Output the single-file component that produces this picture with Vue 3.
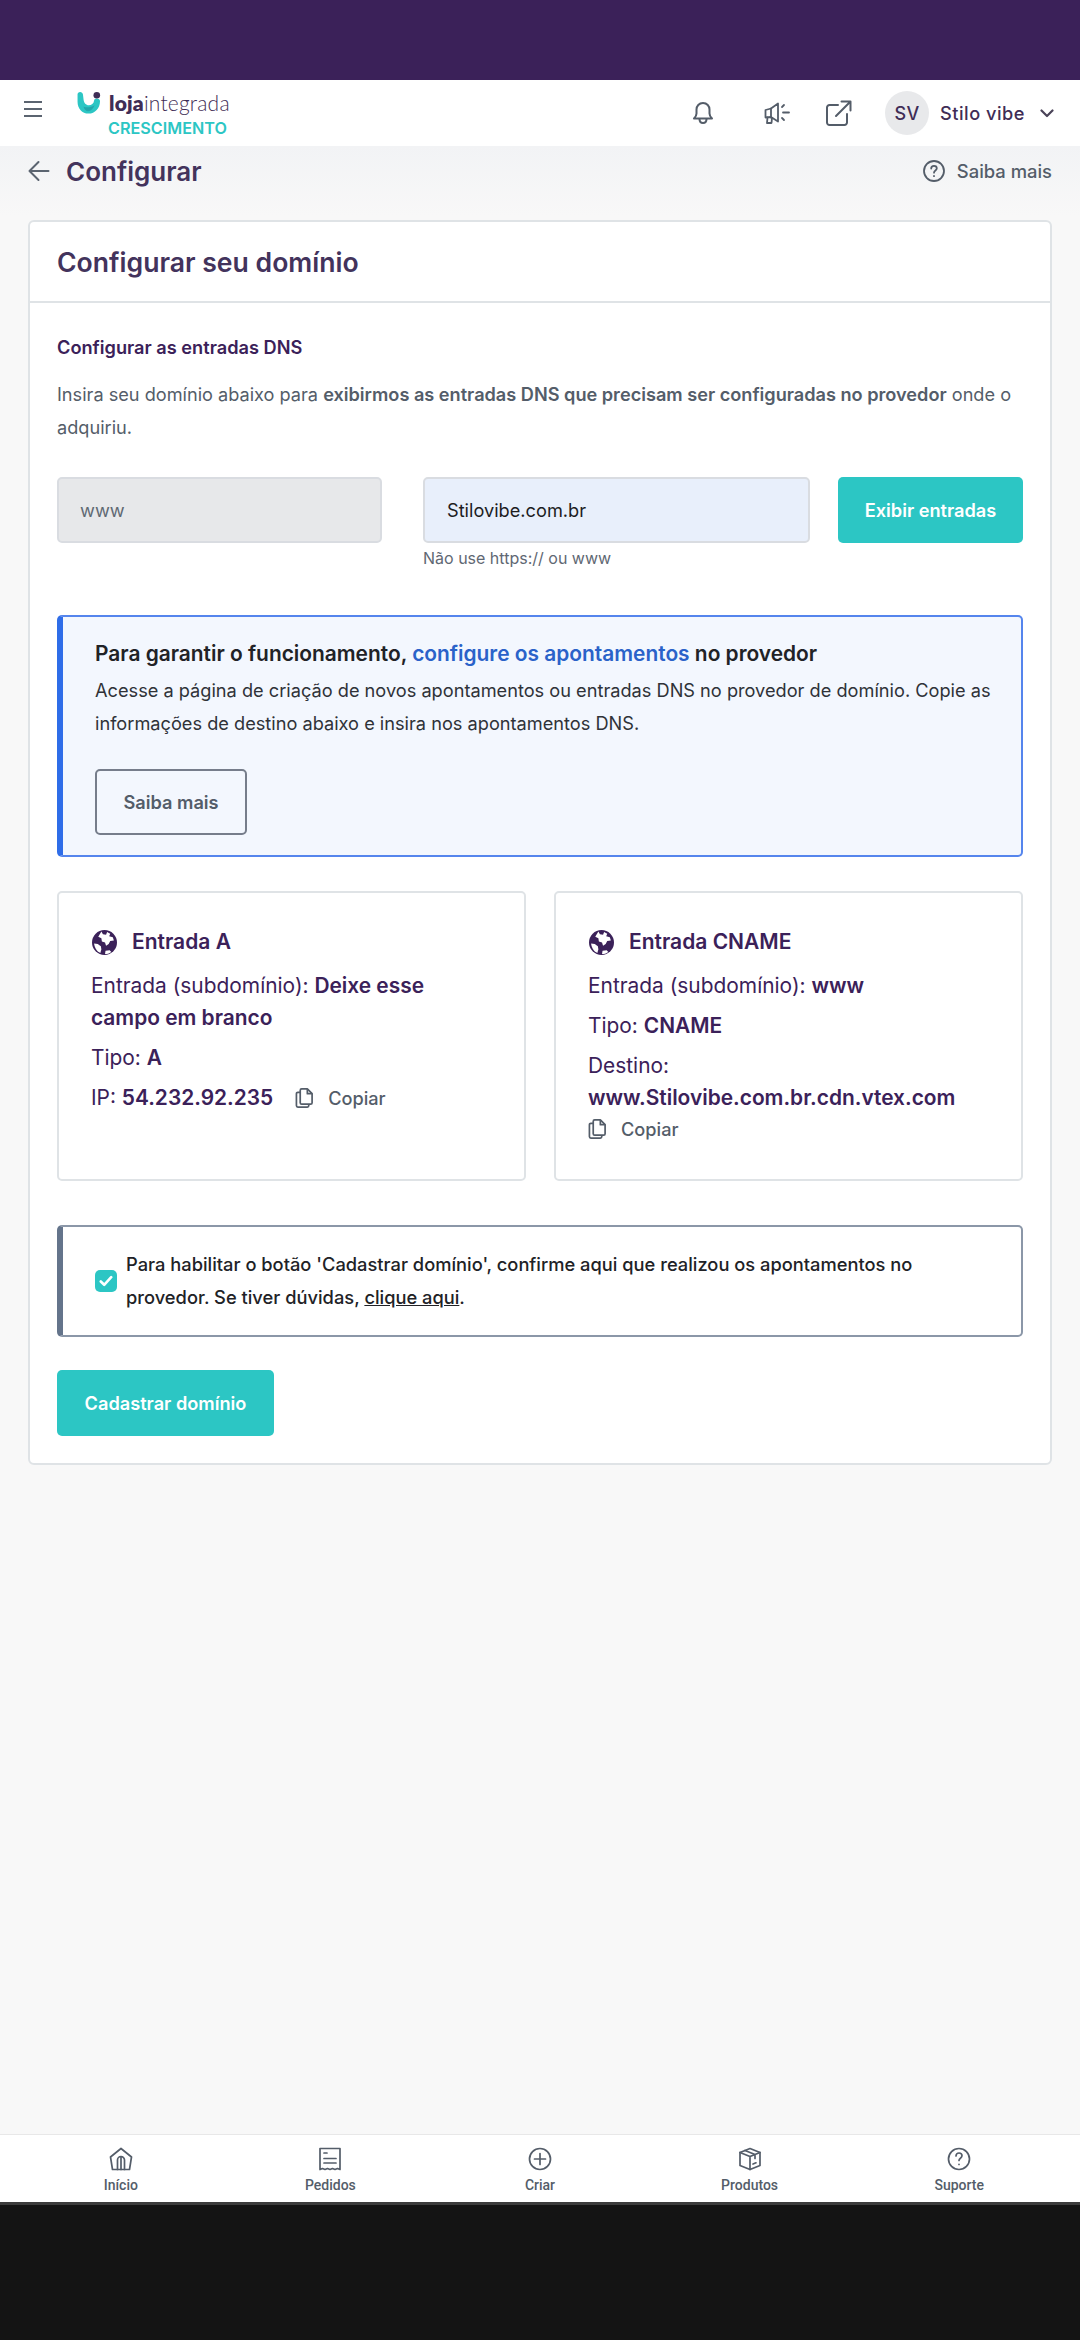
<template>
  <div class="app">
    <div class="topbar"></div>

    <!-- HEADER -->
    <header class="header">
      <button class="menu-btn" aria-label="Menu">
        <svg width="20" height="18" viewBox="0 0 20 18" fill="none" stroke="#5b6470" stroke-width="2">
          <path d="M1 2h18M1 9h18M1 16h18" />
        </svg>
      </button>
      <div class="brand">
        <div class="logo">
          <svg class="logo-mark" width="24" height="22" viewBox="0 0 26 24">
            <path d="M0.500 2.800c0-1.600 1.200-2.800 2.800-2.800s2.900 1.100 3.100 2.800l0.700 5.700c0.500 3.500 2.500 6 5.700 6 3 0 5.300-2 5.700-5 0.200-1.300 1.300-2.300 2.800-2.300 2.200 0 3.700 1 3.700 2.800C25 17.700 19.500 23.500 12.500 23.500S0.500 17.700 0.500 10.500z" fill="#2cc6c4" />
            <path d="M7 16c3 1.200 8 1.200 12-1.500-1.500 4-4 6.500-7 6.500-2 0-4-2-5-5z" fill="#22a6ab" />
            <circle cx="21.500" cy="3.600" r="3.600" fill="#3f2d56" />
          </svg>
          <span class="wordmark"><b>loja</b>integrada</span>
        </div>
        <div class="plan">CRESCIMENTO</div>
      </div>

      <div class="header-actions">
        <svg class="bell" width="22" height="24" viewBox="0 0 22 24" fill="none" stroke="#545d69" stroke-width="2" stroke-linejoin="round">
          <path d="M11 2c-4 0-6.500 3-6.500 6.500v4c0 2-1 3.500-2.500 5h18c-1.500-1.500-2.500-3-2.500-5v-4C17.500 5 15 2 11 2z" />
          <path d="M7.500 18c0 2.500 1.500 4 3.500 4s3.500-1.500 3.500-4" />
        </svg>
        <svg class="megaphone" width="26" height="24" viewBox="0 0 26 24" fill="none" stroke="#545d69" stroke-width="1.800" stroke-linejoin="round" stroke-linecap="round">
          <path d="M1.500 9l5.500-1.500 7-5v18l-7-4.500-5.500 0.500z" />
          <path d="M3.500 16.500l-0.500 5.500h4.500l0.500-5M7 7.500v9" />
          <path d="M18 6l2-2M19 11.500h6M18 17l2 2" />
        </svg>
        <svg class="external" width="26" height="26" viewBox="0 0 26 26" fill="none" stroke="#545d69" stroke-width="2" stroke-linecap="round" stroke-linejoin="round">
          <path d="M12 5H3.500A2.500 2.500 0 0 0 1 7.500v15A2.500 2.500 0 0 0 3.500 25h15a2.500 2.500 0 0 0 2.500-2.500V14" />
          <path d="M10 16L24.500 1.500M15.500 1.500h9v9" />
        </svg>
        <div class="avatar">SV</div>
        <span class="store">Stilo vibe</span>
        <svg width="14" height="9" viewBox="0 0 14 9" fill="none" stroke="#4a4358" stroke-width="2.200" stroke-linecap="round" stroke-linejoin="round">
          <path d="M1.500 1.500L7 7l5.500-5.500" />
        </svg>
      </div>
    </header>

    <main class="page">
      <div class="page-head">
        <div class="page-title">
          <svg width="22" height="22" viewBox="0 0 22 22" fill="none" stroke="#5b6470" stroke-width="2" stroke-linecap="round" stroke-linejoin="round">
            <path d="M20.500 11H1.500M10.500 2L1.500 11l9 9" />
          </svg>
          <h1>Configurar</h1>
        </div>
        <div class="help">
          <svg width="22" height="22" viewBox="0 0 22 22" fill="none" stroke="#545d69" stroke-width="1.800" stroke-linecap="round">
            <circle cx="11" cy="11" r="10" />
            <path d="M8.200 8.500c0-1.700 1.300-2.700 2.800-2.700s2.800 1 2.800 2.500c0 2.200-2.800 2.200-2.800 4.400" />
            <path d="M11 16v0.200" />
          </svg>
          <span>Saiba mais</span>
        </div>
      </div>

      <!-- CARD -->
      <section class="card">
        <div class="card-title">Configurar seu domínio</div>
        <div class="card-body">
          <h3 class="dns-title">Configurar as entradas DNS</h3>
          <p class="intro">
            Insira seu domínio abaixo para
            <strong>exibirmos as entradas DNS que precisam ser configuradas no provedor</strong>
            onde o adquiriu.
          </p>

          <div class="form-row">
            <div class="field sub">www</div>
            <div class="domain-col">
              <div class="field domain">Stilovibe.com.br</div>
              <div class="hint">Não use https:// ou www</div>
            </div>
            <button class="btn show-btn">Exibir entradas</button>
          </div>

          <div class="alert">
            <div class="alert-title">
              Para garantir o funcionamento, <span>configure os apontamentos</span> no provedor
            </div>
            <p>
              Acesse a página de criação de novos apontamentos ou entradas DNS no provedor de domínio. Copie as
              informações de destino abaixo e insira nos apontamentos DNS.
            </p>
            <button class="btn-outline">Saiba mais</button>
          </div>

          <div class="entries">
            <div class="entry">
              <div class="entry-title">
                <svg class="globe" viewBox="0 0 24 24">
                  <circle cx="12" cy="12" r="12" fill="#3b2159" />
                  <path d="M9 1.500l1.500 2.500 3 0.500 1-2.500 3 1.500-1 2.500 3.500 1 1 3-3.500 0.500-1.500 3-2.500 1.500-1-3-3-1-0.500-3-3-1.500z" fill="#fff" />
                  <path d="M2 13l3.500 0.500 3 2 0.500 3-1 3.500c-3-1-5.500-4.500-6-9z" fill="#fff" />
                  <path d="M13 20l4-0.500 1.500 1.500c-2 1.500-4 2-6 2z" fill="#fff" />
                </svg>
                <span>Entrada A</span>
              </div>
              <div class="entry-line">Entrada (subdomínio): <b>Deixe esse campo em branco</b></div>
              <div class="entry-line">Tipo: <b>A</b></div>
              <div class="entry-line ip-line">
                <span>IP: <b>54.232.92.235</b></span>
                <span class="copy">
                  <svg class="copy-icon" viewBox="0 0 20 22" fill="none" stroke="#545d69" stroke-width="1.800" stroke-linejoin="round">
                    <path d="M7 1.500h6l5 5v9.500a1.500 1.500 0 0 1-1.500 1.500h-9.500a1.500 1.500 0 0 1-1.500-1.500V3a1.500 1.500 0 0 1 1.500-1.500z" />
                    <path d="M13 1.500v5h5M5.500 5H3a1.500 1.500 0 0 0-1.500 1.500V19A1.500 1.500 0 0 0 3 20.500h10a1.500 1.500 0 0 0 1.500-1.500v-1.500" />
                  </svg>
                  Copiar
                </span>
              </div>
            </div>

            <div class="entry">
              <div class="entry-title">
                <svg class="globe" viewBox="0 0 24 24">
                  <circle cx="12" cy="12" r="12" fill="#3b2159" />
                  <path d="M9 1.500l1.500 2.500 3 0.500 1-2.500 3 1.500-1 2.500 3.500 1 1 3-3.500 0.500-1.500 3-2.500 1.500-1-3-3-1-0.500-3-3-1.500z" fill="#fff" />
                  <path d="M2 13l3.500 0.500 3 2 0.500 3-1 3.500c-3-1-5.500-4.500-6-9z" fill="#fff" />
                  <path d="M13 20l4-0.500 1.500 1.500c-2 1.500-4 2-6 2z" fill="#fff" />
                </svg>
                <span>Entrada CNAME</span>
              </div>
              <div class="entry-line">Entrada (subdomínio): <b>www</b></div>
              <div class="entry-line">Tipo: <b>CNAME</b></div>
              <div class="entry-line dest">Destino:<br /><b>www.Stilovibe.com.br.cdn.vtex.com</b></div>
              <span class="copy copy-block">
                <svg class="copy-icon" viewBox="0 0 20 22" fill="none" stroke="#545d69" stroke-width="1.800" stroke-linejoin="round">
                  <path d="M7 1.500h6l5 5v9.500a1.500 1.500 0 0 1-1.500 1.500h-9.500a1.500 1.500 0 0 1-1.500-1.500V3a1.500 1.500 0 0 1 1.500-1.500z" />
                  <path d="M13 1.500v5h5M5.500 5H3a1.500 1.500 0 0 0-1.500 1.500V19A1.500 1.500 0 0 0 3 20.500h10a1.500 1.500 0 0 0 1.500-1.500v-1.500" />
                </svg>
                Copiar
              </span>
            </div>
          </div>

          <div class="confirm">
            <span class="check">
              <svg width="14" height="12" viewBox="0 0 14 12" fill="none" stroke="#fff" stroke-width="2.600" stroke-linecap="round" stroke-linejoin="round">
                <path d="M1.800 6.500l3.400 3.300 7-7.600" />
              </svg>
            </span>
            <p>
              Para habilitar o botão 'Cadastrar domínio', confirme aqui que realizou os apontamentos no provedor.
              Se tiver dúvidas, <u>clique aqui</u>.
            </p>
          </div>

          <button class="btn save-btn">Cadastrar domínio</button>
        </div>
      </section>
    </main>

    <!-- BOTTOM NAV -->
    <nav class="bottom-nav">
      <div class="nav-item" v-for="item in navItems" :key="item.label">
        <svg width="24" height="24" viewBox="0 0 24 24" fill="none" stroke="#545d69" stroke-width="1.700" stroke-linecap="round" stroke-linejoin="round">
          <path v-for="(d, i) in item.paths" :key="i" :d="d" />
        </svg>
        <span>{{ item.label }}</span>
      </div>
    </nav>
    <div class="system-bar"></div>
  </div>
</template>

<script setup>
const navItems = [
  {
    label: "Início",
    paths: [
      "M12 1.500L22.500 10l-2 12.500h-17L1.500 10z",
      "M8.500 22.500V13a3.500 3.500 0 0 1 7 0v9.500M12 10v12.500",
    ],
  },
  {
    label: "Pedidos",
    paths: [
      "M2 1.500h20v21l-2.500-1-2.500 1-2.500-1-2.500 1-2.500-1-2.500 1-2.500-1-2.500 1z",
      "M6 6h3M6 11.500h12M6 16h12",
    ],
  },
  {
    label: "Criar",
    paths: [
      "M12 1.500a10.500 10.500 0 1 0 0 21 10.500 10.500 0 0 0 0-21z",
      "M12 6.500v11M6.500 12h11",
    ],
  },
  {
    label: "Produtos",
    paths: [
      "M12 1.500l10 4v13l-10 4-10-4v-13z",
      "M2 5.500l10 4 10-4M12 9.500v13M7 3.500l10 4v4",
      "M15 17l3-1.200",
    ],
  },
  {
    label: "Suporte",
    paths: [
      "M12 1.500a10.500 10.500 0 1 0 0 21 10.500 10.500 0 0 0 0-21z",
      "M9 9c0-1.800 1.300-3 3-3s3 1.200 3 2.800c0 2.400-3 2.400-3 4.600M12 17.300v0.200",
    ],
  },
];
</script>

<style>
html,
body {
  margin: 0;
  background: #141414;
}
</style>

<style scoped>
.app {
  width: 1080px;
  height: 2340px;
  display: flex;
  flex-direction: column;
  font-family: Inter, "Liberation Sans", sans-serif;
  background: #f8f8f8;
  color: #3b2159;
  overflow: hidden;
}

.topbar {
  height: 80px;
  background: #3b2159;
  flex: none;
}

.header {
  height: 66px;
  flex: none;
  background: #fff;
  display: flex;
  align-items: center;
  padding: 0 26px 0 23px;
  position: relative;
}

.menu-btn {
  border: 0;
  background: none;
  padding: 0;
  width: 20px;
  height: 18px;
  margin-top: -8px;
}

.brand {
  margin-left: 34px;
  margin-top: 2px;
}

.logo {
  display: flex;
  align-items: center;
  height: 24px;
}

.wordmark {
  margin-left: 8px;
  font-family: Lato, sans-serif;
  font-size: 21px;
  font-weight: 300;
  letter-spacing: 0.2px;
  color: #3f2d56;
  line-height: 24px;
}

.wordmark b {
  font-weight: 800;
}

.plan {
  margin-left: 31px;
  margin-top: 4px;
  font-size: 16.2px;
  font-weight: 600;
  line-height: 18px;
  color: #2cc6c4;
}

.header-actions {
  margin-left: auto;
  display: flex;
  align-items: center;
}

.bell {
  margin-right: 50px;
}

.megaphone {
  margin-right: 36px;
}

.external {
  margin-right: 33px;
}

.avatar {
  width: 44px;
  height: 44px;
  border-radius: 50%;
  background: #e8e9eb;
  color: #3f2d56;
  font-size: 18px;
  font-weight: 500;
  letter-spacing: 0.5px;
  display: flex;
  align-items: center;
  justify-content: center;
}

.store {
  margin-left: 11px;
  margin-right: 15px;
  font-size: 18.2px;
  font-weight: 500;
  letter-spacing: 0.5px;
  color: #3f2d56;
}

.page {
  flex: 1;
  min-height: 0;
  padding: 0 28px;
  background: linear-gradient(#f2f3f5, #f8f8f8 70px) no-repeat;
}

.page-head {
  height: 74px;
  padding-bottom: 24px;
  box-sizing: border-box;
  display: flex;
  align-items: center;
  justify-content: space-between;
}

.page-title {
  display: flex;
  align-items: center;
  gap: 16px;
}

.page-title h1 {
  margin: 0;
  font-size: 26px;
  font-weight: 600;
  color: #43335c;
}

.help {
  display: flex;
  align-items: center;
  gap: 12px;
  font-size: 18.4px;
  font-weight: 500;
  color: #545d69;
}

.card {
  background: #fff;
  border: 2px solid #dfe3e6;
  border-radius: 6px;
}

.card-title {
  height: 79px;
  box-sizing: content-box;
  padding-left: 27px;
  padding-bottom: 0;
  display: flex;
  align-items: center;
  font-size: 26.6px;
  line-height: 30px;
  font-weight: 600;
  color: #43335c;
  border-bottom: 2px solid #dfe3e6;
}

.card-body {
  padding: 31px 27px 27px;
}

.dns-title {
  margin: 0;
  font-size: 18.2px;
  line-height: 26px;
  font-weight: 600;
  color: #3b2159;
}

.intro {
  margin: 18px 0 0;
  font-size: 18.15px;
  line-height: 33px;
  color: #545d69;
}

.intro strong {
  font-weight: 600;
}

.form-row {
  display: flex;
  align-items: flex-start;
  margin-top: 33px;
}

.field {
  height: 66px;
  box-sizing: border-box;
  border: 2px solid #d9dce1;
  border-radius: 5px;
  padding-left: 22px;
  display: flex;
  align-items: center;
  font-size: 18.2px;
}

.sub {
  width: 325px;
  padding-left: 21px;
  background: #e7e8ea;
  color: #5f6873;
}

.domain-col {
  width: 387px;
  margin-left: 41px;
}

.domain {
  background: #e8effb;
  color: #1d1d1f;
}

.hint {
  margin-top: 4px;
  font-size: 16px;
  line-height: 22px;
  color: #5f6873;
}

.btn {
  height: 66px;
  border: 0;
  border-radius: 5px;
  background: #2cc6c4;
  color: #fff;
  font-family: inherit;
  font-size: 18.2px;
  font-weight: 600;
}

.show-btn {
  width: 185px;
  margin-left: 28px;
}

.alert {
  margin-top: 46px;
  height: 242px;
  box-sizing: border-box;
  background: #f3f7fe;
  border: 2px solid #5585ed;
  border-left: 6px solid #2f6de8;
  border-radius: 5px;
  padding: 22px 20px 0 32px;
}

.alert-title {
  font-size: 20.9px;
  line-height: 30px;
  font-weight: 600;
  color: #212226;
}

.alert-title span {
  color: #2a62c9;
}

.alert p {
  margin: 5px 0 0;
  font-size: 18.2px;
  line-height: 33px;
  color: #2f3238;
}

.btn-outline {
  display: block;
  margin-top: 29px;
  width: 152px;
  height: 66px;
  background: transparent;
  border: 2px solid #767d8b;
  border-radius: 5px;
  font-family: inherit;
  font-size: 18.2px;
  font-weight: 600;
  color: #545d69;
}

.entries {
  margin-top: 34px;
  display: grid;
  grid-template-columns: 1fr 1fr;
  gap: 28px;
}

.entry {
  height: 290px;
  box-sizing: border-box;
  border: 2px solid #dfe3e6;
  border-radius: 5px;
  padding: 35px 32px 0;
  font-size: 20.9px;
  color: #3b2159;
}

.entry-title {
  display: flex;
  align-items: center;
  gap: 15px;
  font-size: 21px;
  font-weight: 600;
  line-height: 28px;
  color: #3b2159;
}

.globe {
  width: 25px;
  height: 25px;
  margin-left: 1px;
  flex: none;
}

.entry-line {
  margin-top: 8px;
  line-height: 32px;
}

.entry-title + .entry-line {
  margin-top: 14px;
}

.entry-line b {
  font-weight: 600;
  color: #3b2159;
}

.ip-line {
  display: flex;
  align-items: center;
}

.copy {
  display: inline-flex;
  align-items: center;
  gap: 14px;
  margin-left: 22px;
  font-size: 18.2px;
  font-weight: 500;
  color: #545d69;
}

.copy-icon {
  width: 19px;
  height: 22px;
  flex: none;
}

.copy-block {
  margin-left: 0;
  margin-top: 4px;
}

.confirm {
  margin-top: 44px;
  height: 112px;
  box-sizing: border-box;
  border: 2px solid #8b97a8;
  border-left: 6px solid #64748b;
  border-radius: 5px;
  display: flex;
  align-items: center;
  padding-left: 32px;
  padding-right: 40px;
}

.check {
  width: 22px;
  height: 22px;
  flex: none;
  border-radius: 5px;
  background: #2cc6c4;
  display: flex;
  align-items: center;
  justify-content: center;
  margin-right: 9px;
}

.confirm p {
  margin: 0;
  font-size: 18.3px;
  line-height: 33px;
  font-weight: 500;
  color: #212226;
}

.save-btn {
  display: block;
  margin-top: 33px;
  width: 217px;
}

.bottom-nav {
  height: 68px;
  flex: none;
  box-sizing: border-box;
  background: #fff;
  border-top: 1px solid #e8e8e8;
  display: grid;
  grid-template-columns: repeat(5, 1fr);
  padding: 0 16px;
}

.nav-item {
  display: flex;
  flex-direction: column;
  align-items: center;
  padding-top: 12px;
  font-family: Roboto, sans-serif;
  font-size: 14px;
  font-weight: 500;
  line-height: 16px;
  color: #545d69;
}

.nav-item span {
  margin-top: 6px;
}

.system-bar {
  height: 138px;
  flex: none;
  background: #141414;
  border-top: 3px solid #3c3c3c;
  box-sizing: border-box;
}
</style>
